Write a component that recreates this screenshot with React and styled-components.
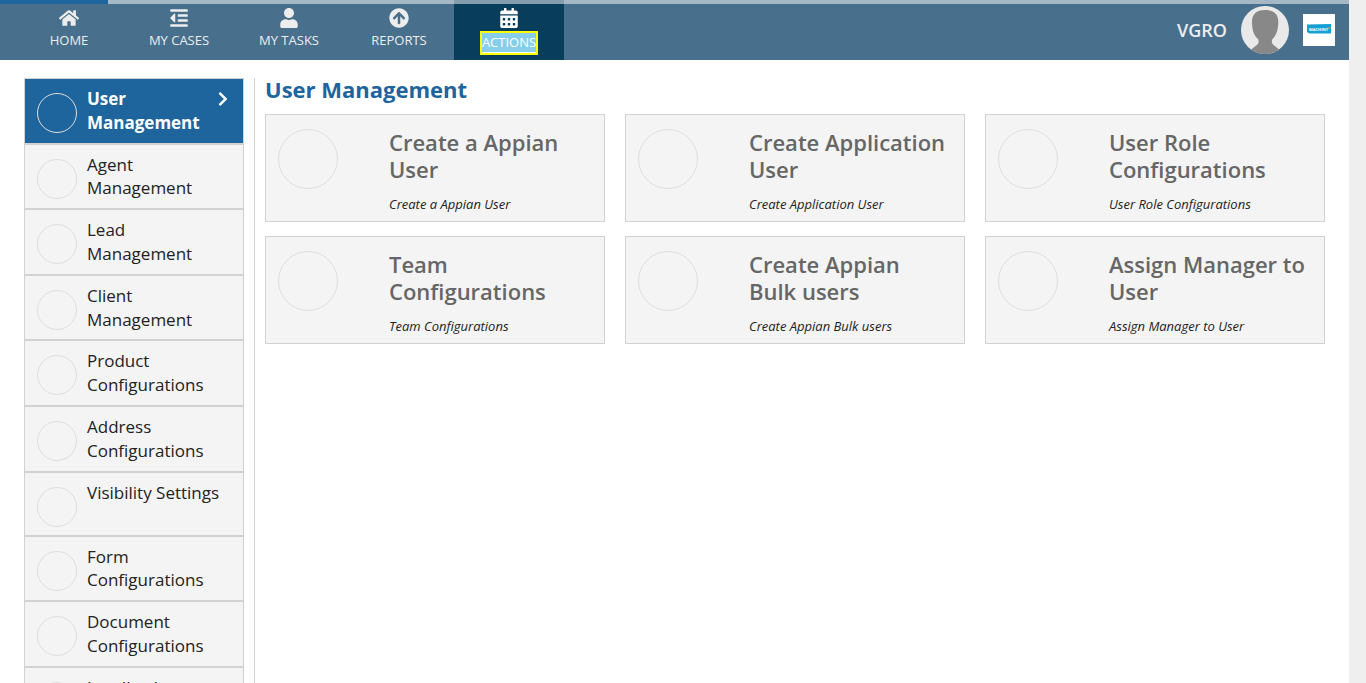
import React from 'react';
import styled, { createGlobalStyle, css } from 'styled-components';
import { FaHome, FaOutdent, FaUser, FaArrowCircleUp, FaCalendarAlt, FaChevronRight } from 'react-icons/fa';

const GlobalStyle = createGlobalStyle`
  *, *::before, *::after { box-sizing: border-box; }
  body { margin: 0; background: #efefef; color: #222; font-family: "Open Sans", sans-serif; }
`;

const Page = styled.div`
  display: flex;
  flex-direction: column;
  height: 100vh;
  margin-right: 17px;
  overflow: hidden;
  background: #fff;
`;

const Header = styled.header`
  position: relative;
  display: flex;
  flex: none;
  justify-content: space-between;
  height: 60px;
  padding-left: 14px;
  background: #48708d;
`;

const LoadingTrack = styled.div`
  position: absolute;
  top: 0;
  left: 0;
  right: 0;
  height: 4px;
  background: rgba(255, 255, 255, 0.5);
`;

const LoadingBar = styled.div`
  width: 8%;
  height: 100%;
  background: #1d659c;
`;

const Tabs = styled.nav`
  display: flex;
`;

const Tab = styled.a`
  display: flex;
  flex-direction: column;
  align-items: center;
  width: 110px;
  padding-top: 8px;
  color: #ededed;
  font-size: 13px;
  line-height: 20px;
  text-decoration: none;
  ${({ $active }) => $active && css`
    background: #083d5c;
    color: #fff;
  `}
  svg { display: block; width: 20px; height: 20px; }
`;

const TabLabel = styled.span`
  margin-top: 2px;
  ${({ $active }) => $active && css`
    margin-top: 3px;
    padding-bottom: 2px;
    border: 2px solid #ff0;
    background: #87ceeb;
    line-height: 18px;
    box-shadow: inset 0 -1px #fff;
  `}
`;

const Account = styled.div`
  display: flex;
  align-items: center;
  gap: 14px;
  padding-right: 14px;
`;

const UserName = styled.span`
  color: #ededed;
  font-size: 18px;
  font-weight: 600;
`;

const AvatarButton = styled.button`
  width: 48px;
  height: 48px;
  padding: 0;
  border: 0;
  border-radius: 50%;
  background: none;
  svg { display: block; }
`;

const Body = styled.div`
  display: flex;
  flex: 1;
  min-height: 0;
  padding: 18px 24px 0;
`;

const Sidebar = styled.nav`
  flex: none;
  width: 231px;
  padding-right: 11px;
  border-right: 1px solid #d2d2d2;
  overflow: hidden;
`;

const SideItem = styled.a`
  display: flex;
  gap: 10px;
  width: 220px;
  min-height: 64px;
  padding: 8px 12px;
  border: 1px solid #d2d2d2;
  background: #f4f4f4;
  color: #222;
  font-size: 17px;
  line-height: 1.4;
  text-decoration: none;
  ${({ $active }) => $active && css`
    background: #1d659c;
    color: #fff;
    font-weight: 700;
  `}
`;

const SideLabel = styled.span`
  flex: 1;
`;

const Chevron = styled(FaChevronRight)`
  flex: none;
  width: 16px;
  height: 16px;
  margin-top: 4px;
`;

const Circle = styled.span`
  flex: none;
  width: ${({ $size }) => $size}px;
  height: ${({ $size }) => $size}px;
  margin-top: 6px;
  border: 1px solid #dedede;
  border-radius: 50%;
`;

const Main = styled.main`
  flex: 1;
  min-width: 0;
  padding-left: 10px;
`;

const Title = styled.h1`
  margin: 0 0 14px;
  color: #1d659c;
  font-size: 22px;
  font-weight: 700;
  line-height: 22px;
`;

const CardGrid = styled.div`
  display: grid;
  grid-template-columns: repeat(3, 1fr);
  gap: 14px 20px;
`;

const Card = styled.a`
  display: flex;
  gap: 51px;
  padding: 8px 12px;
  border: 1px solid #d2d2d2;
  background: #f4f4f4;
  color: #222;
  text-decoration: none;
`;

const CardText = styled.div`
  flex: 1;
  min-width: 0;
  padding-top: 6px;
`;

const CardTitle = styled.h2`
  margin: 0 0 12px;
  color: #666;
  font-size: 22px;
  font-weight: 600;
  line-height: 27px;
`;

const CardNote = styled.p`
  margin: 0;
  font-size: 13px;
  font-style: italic;
  line-height: 18px;
`;

const tabs = [
  ['HOME', FaHome],
  ['MY CASES', FaOutdent],
  ['MY TASKS', FaUser],
  ['REPORTS', FaArrowCircleUp],
  ['ACTIONS', FaCalendarAlt],
];

const sections = [
  'User Management',
  'Agent Management',
  'Lead Management',
  'Client Management',
  'Product Configurations',
  'Address Configurations',
  'Visibility Settings',
  'Form Configurations',
  'Document Configurations',
  'Landlord Management',
];

const actions = [
  'Create a Appian User',
  'Create Application User',
  'User Role Configurations',
  'Team Configurations',
  'Create Appian Bulk users',
  'Assign Manager to User',
];

function Avatar() {
  return (
    <svg width="48" height="48" viewBox="0 0 48 48" aria-hidden="true">
      <circle cx="24" cy="24" r="24" fill="#e9e9e9" />
      <path
        d="M24 4C15 4 11 8.500 11 16C11 23 12.500 29 17 33C18.500 36 17.500 38.500 14 40.500L10 43.500A24 24 0 0 0 38 43.500L34.500 40.500C31 38.500 30 36 31.500 33C35.500 29 37.300 23 37.300 16C37.300 8.500 33 4 24 4Z"
        fill="#888"
      />
    </svg>
  );
}

function Logo() {
  return (
    <svg width="32" height="32" viewBox="0 0 32 32" role="img" aria-label="Company logo">
      <rect width="32" height="32" fill="#fff" />
      <path d="M4 10.500L28 10V19.500H6.500L4 18Z" fill="#14a0d2" />
      <path d="M24.500 14.500L27.500 12L26.500 15.500Z" fill="#f08a3c" />
      <text x="6" y="17" fill="#fff" fontFamily="Open Sans, sans-serif" fontSize="4" fontWeight="700">MACHINT</text>
    </svg>
  );
}

export default function App() {
  return (
    <>
      <GlobalStyle />
      <Page>
        <Header>
          <Tabs aria-label="Sites">
            {tabs.map(([label, Icon]) => (
              <Tab key={label} href="#" $active={label === 'ACTIONS'}>
                <Icon aria-hidden="true" />
                <TabLabel $active={label === 'ACTIONS'}>{label}</TabLabel>
              </Tab>
            ))}
          </Tabs>
          <Account>
            <UserName>VGRO</UserName>
            <AvatarButton type="button" aria-label="User options"><Avatar /></AvatarButton>
            <Logo />
          </Account>
          <LoadingTrack><LoadingBar /></LoadingTrack>
        </Header>
        <Body>
          <Sidebar aria-label="Sections">
            {sections.map((label, i) => (
              <SideItem key={label} href="#" $active={i === 0}>
                <Circle $size={40} />
                <SideLabel>{label}</SideLabel>
                {i === 0 && <Chevron aria-hidden="true" />}
              </SideItem>
            ))}
          </Sidebar>
          <Main>
            <Title>User Management</Title>
            <CardGrid>
              {actions.map((label) => (
                <Card key={label} href="#">
                  <Circle $size={60} />
                  <CardText>
                    <CardTitle>{label}</CardTitle>
                    <CardNote>{label}</CardNote>
                  </CardText>
                </Card>
              ))}
            </CardGrid>
          </Main>
        </Body>
      </Page>
    </>
  );
}
